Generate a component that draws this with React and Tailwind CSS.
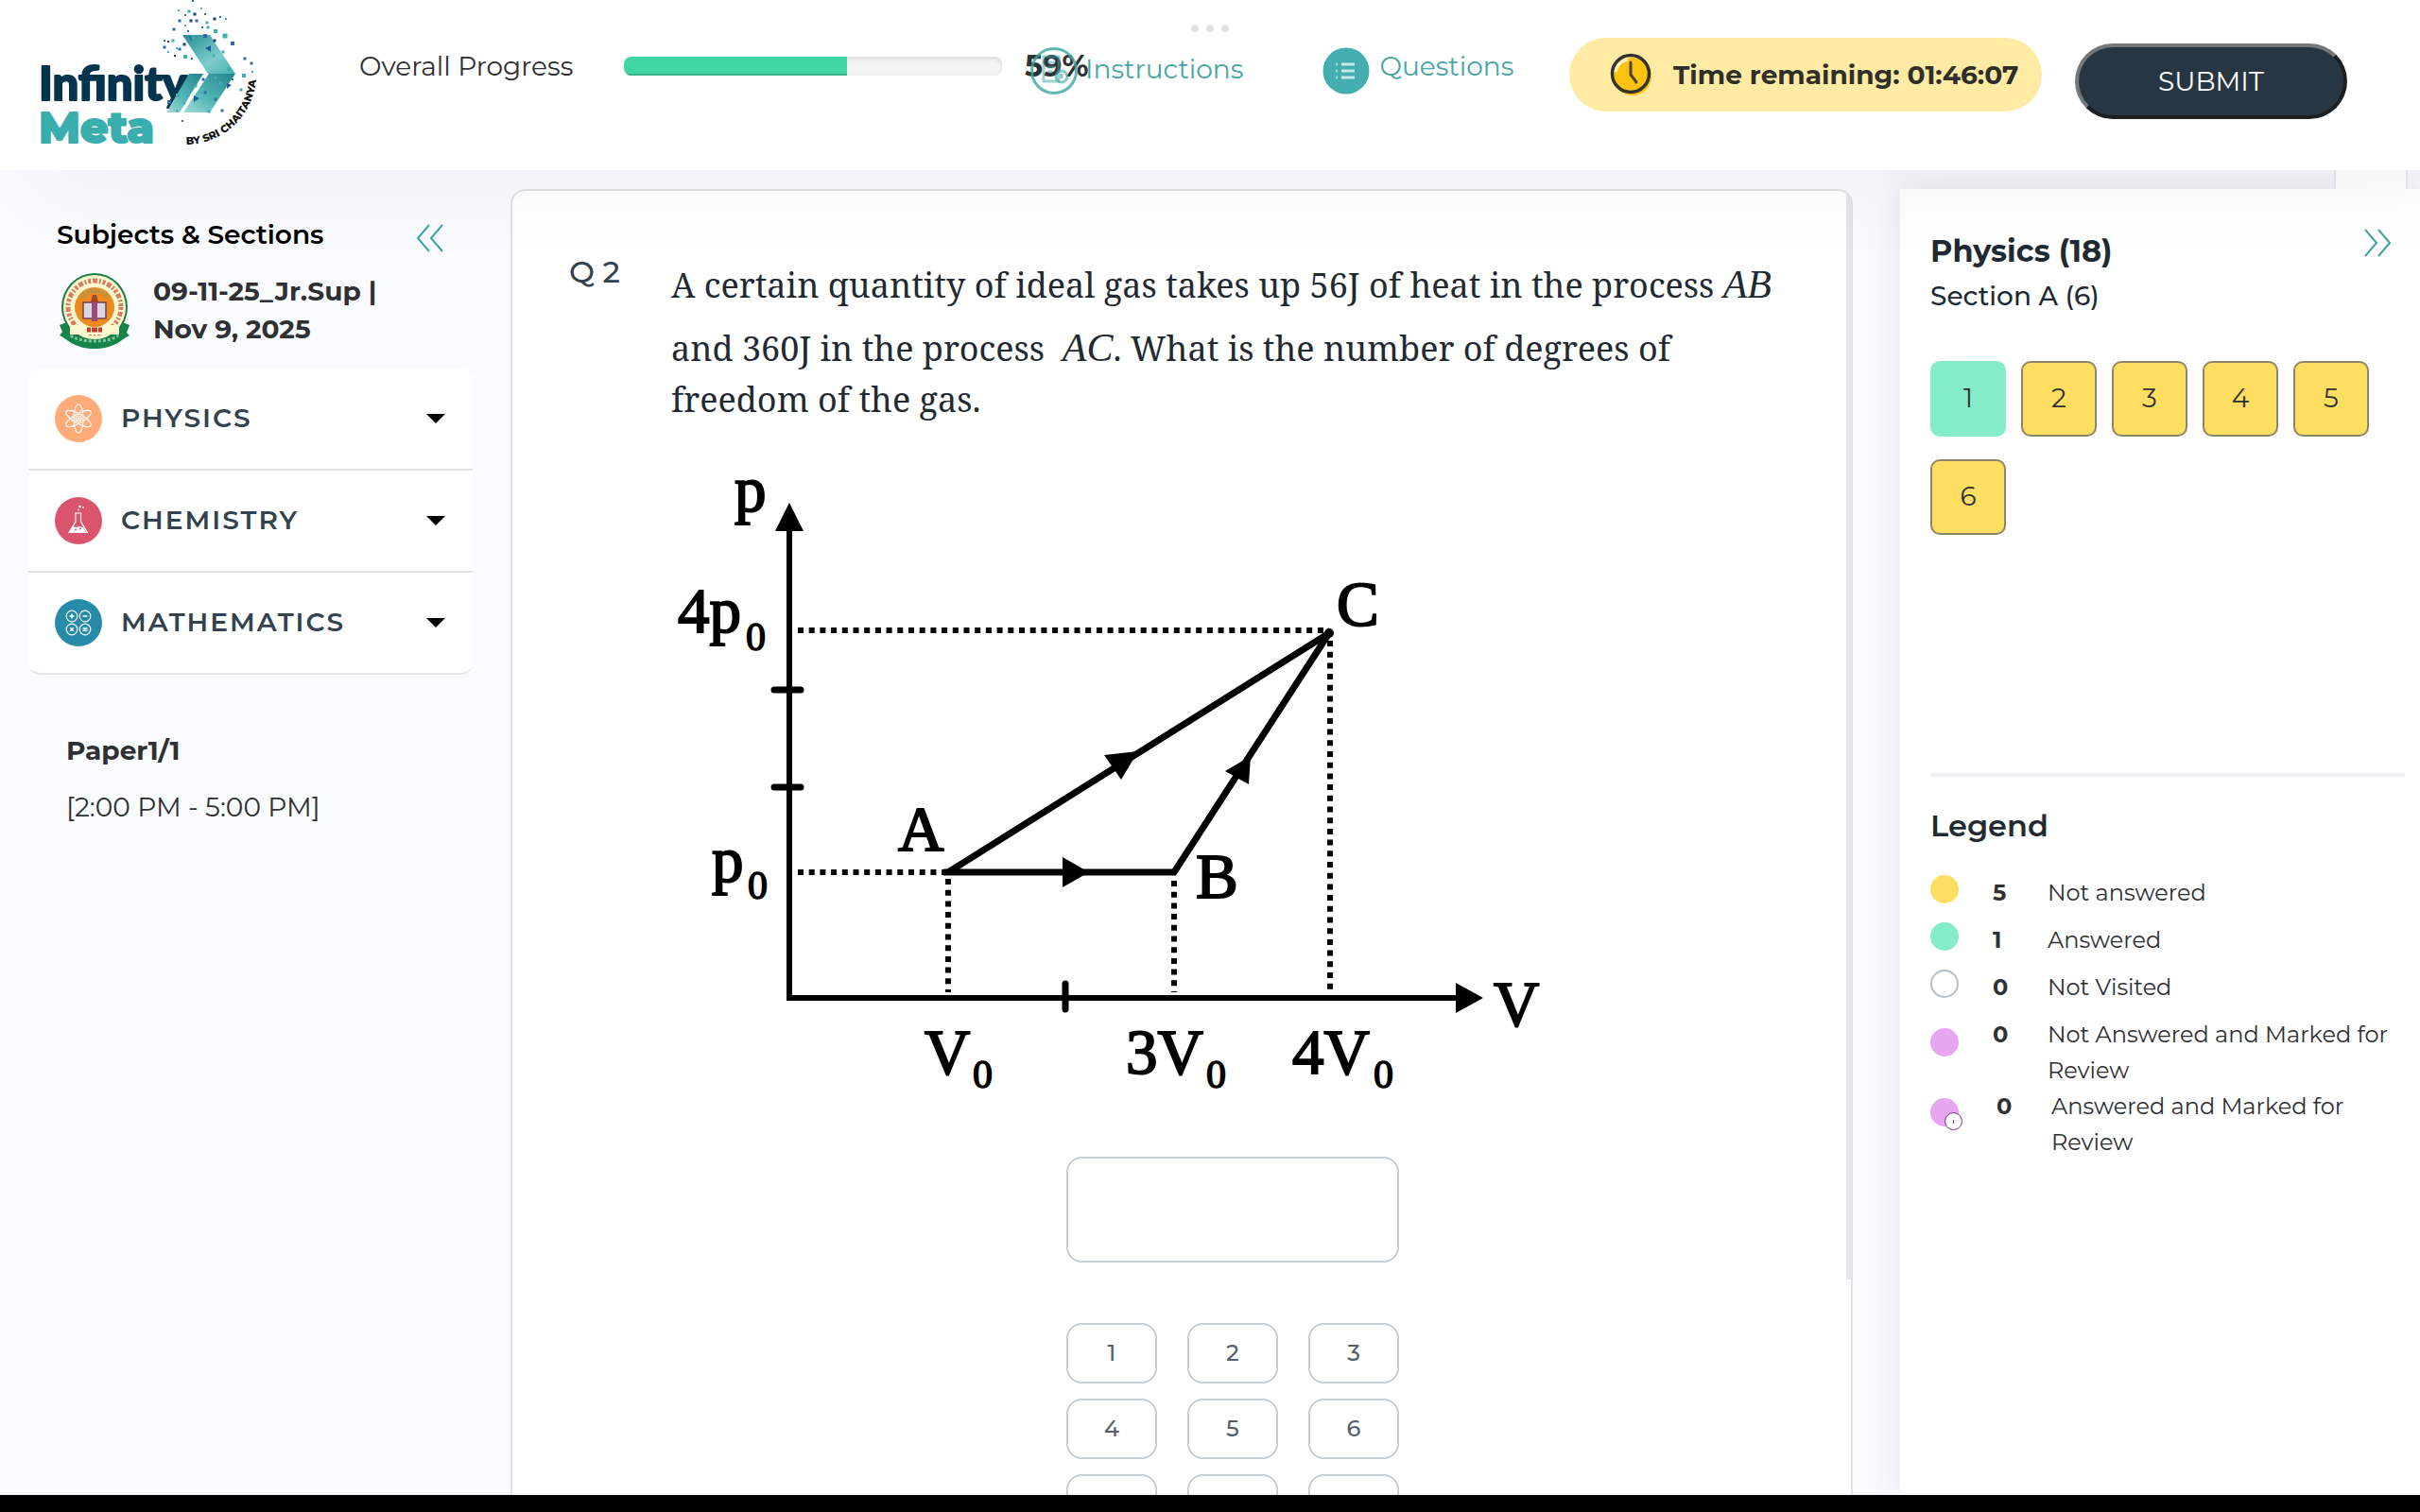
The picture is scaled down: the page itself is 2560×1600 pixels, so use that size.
import { useState } from 'react'

const subjects = [
  { name: 'PHYSICS', Icon: PhysicsIcon },
  { name: 'CHEMISTRY', Icon: ChemistryIcon },
  { name: 'MATHEMATICS', Icon: MathsIcon },
]

const questions = [
  { no: 1, answered: true },
  { no: 2, answered: false },
  { no: 3, answered: false },
  { no: 4, answered: false },
  { no: 5, answered: false },
  { no: 6, answered: false },
]

const legend = [
  { count: 5, label: 'Not answered', dot: 'bg-[#fdde60]' },
  { count: 1, label: 'Answered', dot: 'bg-[#84ecc9]' },
  { count: 0, label: 'Not Visited', dot: 'bg-white border-2 border-[#b7bec5]' },
  { count: 0, label: 'Not Answered and Marked for Review', dot: 'mt-3 bg-[#e7a5f2]', tall: true },
]

const keys = ['1', '2', '3', '4', '5', '6', '7', '8', '9']

// x, y, size, colour index
const specks = [
  [174, 1, 2, 1], [159, 11, 2, 0], [166, 16, 2, 1], [170, 12, 3, 0], [176, 15, 3, 2], [183, 9, 2, 0],
  [187, 15, 2, 1], [160, 22, 3, 1], [172, 22, 3, 2], [178, 22, 3, 1], [189, 24, 3, 0], [197, 20, 3, 2],
  [203, 18, 2, 1], [209, 20, 2, 0], [166, 27, 2, 0], [184, 29, 2, 1], [190, 29, 3, 0], [154, 31, 3, 1],
  [198, 33, 4, 0], [169, 33, 2, 1], [208, 38, 5, 0], [216, 46, 4, 1], [144, 43, 2, 1], [153, 43, 3, 0],
  [148, 44, 2, 2], [165, 47, 3, 2], [144, 50, 3, 1], [157, 51, 2, 0], [160, 52, 3, 1], [148, 55, 2, 0],
  [155, 59, 2, 2], [173, 62, 2, 1], [166, 60, 4, 0], [174, 40, 3, 0], [187, 38, 4, 1], [197, 43, 3, 2],
  [196, 59, 3, 0], [206, 55, 3, 0], [229, 62, 3, 1], [236, 67, 3, 1], [212, 73, 4, 0], [228, 80, 4, 0],
  [237, 76, 2, 0], [185, 84, 3, 1], [177, 91, 3, 0], [198, 82, 3, 0], [203, 88, 3, 0], [187, 98, 3, 1],
  [225, 95, 3, 0], [235, 94, 2, 1], [198, 105, 3, 1], [194, 104, 2, 0], [149, 108, 4, 1], [205, 117, 3, 1],
  [157, 117, 2, 0], [163, 128, 2, 1], [191, 118, 3, 0], [165, 109, 3, 0], [158, 101, 4, 0], [216, 84, 2, 1],
]
const speckColors = ['#3eb0b0', '#3468a8', '#1d3f7a']

function Logo() {
  return (
    <svg viewBox="0 0 260 170" className="block h-[170px] w-[260px]" role="img" aria-label="Infinity Meta by Sri Chaitanya">
      <defs>
        <linearGradient id="wingTop" x1="0" y1="0" x2="1" y2="1">
          <stop offset="0" stopColor="#238b91" />
          <stop offset="0.6" stopColor="#7dcdca" />
          <stop offset="1" stopColor="#46b0b0" />
        </linearGradient>
        <linearGradient id="wingLow" x1="1" y1="0" x2="0" y2="1">
          <stop offset="0" stopColor="#1f858c" />
          <stop offset="0.6" stopColor="#55b8b7" />
          <stop offset="1" stopColor="#a3dcda" />
        </linearGradient>
        <path id="byline" d="M167 153 A75 75 0 0 0 241 72" />
      </defs>
      <g strokeWidth="2" strokeLinejoin="round">
        <text x="11" y="106" fontSize="49" fontWeight="900" fontFamily="Lato, sans-serif" fill="#04344e" stroke="#04344e">Infinity</text>
        <text x="11" y="151" fontSize="46" fontWeight="800" fontFamily="Montserrat, Inter, sans-serif" fill="#3aaead" stroke="#3aaead">Meta</text>
      </g>
      <path d="M163 37h29l27 41h-29z" fill="url(#wingTop)" />
      <path d="M191 78h28l-27 41h-28z" fill="url(#wingLow)" />
      <path d="M170 78h15l-25 41h-14z" fill="url(#wingLow)" />
      <path d="M187 51l6-3v7zM175 101l6 3-6 4zM210 88l5 2-5 4zM170 38l5 2-3 3z" fill="#235e9c" />
      {specks.map(([x, y, s, c], i) => (
        <rect key={i} x={x - s / 2} y={y - s / 2} width={s} height={s} fill={speckColors[c]} />
      ))}
      <text fontSize="11" fontWeight="800" fill="#111" fontFamily="Montserrat, Inter, sans-serif">
        <textPath href="#byline">BY SRI CHAITANYA</textPath>
      </text>
    </svg>
  )
}

function Emblem() {
  return (
    <svg viewBox="0 0 80 82" className="block h-[82px] w-20 shrink-0" aria-hidden="true">
      <path d="M3 56l10-4h54l10 4-3 8 3 3c-8 3-14 14-37 14S11 70 3 67l3-4z" fill="#17854a" />
      <ellipse cx="40" cy="37" rx="35" ry="36" fill="#1b7f45" />
      <ellipse cx="40" cy="37" rx="33" ry="34" fill="#fdf8cf" />
      <circle cx="40" cy="37" r="28" fill="none" stroke="#c8553d" strokeWidth="5" strokeDasharray="3 2 5 2 2 2" pathLength="180" opacity="0.75" />
      <path d="M14 56h52v10H14z" fill="#fdf8cf" />
      <circle cx="40" cy="37" r="21" fill="#ee8a1d" />
      <path d="M26 27a17 17 0 0 1 28 0" fill="none" stroke="#9b9a5c" strokeWidth="5" strokeDasharray="2 2" />
      <path d="M38 24h4l2 8h-8z" fill="#a3462a" />
      <path d="M28 32h9l3 2 3-2h9v17H28z" fill="#dcd8de" stroke="#6f4256" strokeWidth="1.5" />
      <path d="M37 32h6v20h-6z" fill="#9c4a7e" />
      <path d="M32 61h4m1 0h6m1 0h4" stroke="#c23c2c" strokeWidth="5" />
      <path d="M15 67c8 8 42 8 50 0" fill="none" stroke="#7fc49a" strokeWidth="3" strokeDasharray="3 2" />
    </svg>
  )
}

function PhysicsIcon() {
  return (
    <svg viewBox="0 0 50 50" className="size-[50px] shrink-0" aria-hidden="true">
      <circle cx="25" cy="25" r="25" fill="#ffac7a" />
      <g fill="none" stroke="#fff" strokeWidth="1.2">
        <ellipse cx="25" cy="25" rx="5" ry="15" />
        <ellipse cx="25" cy="25" rx="5" ry="15" transform="rotate(60 25 25)" />
        <ellipse cx="25" cy="25" rx="5" ry="15" transform="rotate(120 25 25)" />
        <circle cx="25" cy="25" r="3" />
      </g>
      <circle cx="25" cy="25" r="1.6" fill="#fff" />
    </svg>
  )
}

function ChemistryIcon() {
  return (
    <svg viewBox="0 0 50 50" className="size-[50px] shrink-0" aria-hidden="true">
      <circle cx="25" cy="25" r="25" fill="#da546e" />
      <path d="M21 17h7m-6 0v9l-7 11.5h19.5l-7-11.5v-9" fill="none" stroke="#fff" strokeWidth="1.2" />
      <path d="M19 31l3 1 4-1 4 1 3 5H16z" fill="#fff" />
      <circle cx="22" cy="34.5" r="1" fill="#da546e" />
      <circle cx="27" cy="33.5" r="1" fill="#da546e" />
      <circle cx="25" cy="13.5" r="0.9" fill="#fff" />
      <circle cx="26.5" cy="10" r="1.3" fill="#fff" />
      <circle cx="30" cy="11" r="1" fill="#fff" />
    </svg>
  )
}

function MathsIcon() {
  return (
    <svg viewBox="0 0 50 50" className="size-[50px] shrink-0" aria-hidden="true">
      <circle cx="25" cy="25" r="25" fill="#288aa9" />
      <g fill="none" stroke="#fff" strokeWidth="1.2">
        <circle cx="18" cy="18" r="5.8" />
        <circle cx="32" cy="18" r="5.8" />
        <circle cx="18" cy="32" r="5.8" />
        <circle cx="32" cy="32" r="5.8" />
        <path d="M15.5 18h5M18 15.5v5M29.5 18h5M16.2 30.2l3.6 3.6M19.8 30.2l-3.6 3.6M29.5 31h5M29.5 33.2h5" strokeWidth="1.5" />
      </g>
    </svg>
  )
}

function ClockIcon() {
  return (
    <svg viewBox="0 0 50 50" className="size-[50px] shrink-0" aria-hidden="true">
      <circle cx="27" cy="27" r="20" fill="#ffc20e" />
      <circle cx="25" cy="24" r="19.5" fill="none" stroke="#33352c" strokeWidth="3.5" />
      <path d="M25 12v13l6 8" fill="none" stroke="#4a4325" strokeWidth="3" strokeLinecap="round" />
      <path d="M9 22a16 16 0 0 1 13-13" fill="none" stroke="#fff3c4" strokeWidth="3" />
    </svg>
  )
}

function DoubleChevron({ right }) {
  return (
    <svg viewBox="0 0 30 30" className="size-[30px]" fill="none" stroke="#3aa6a4" strokeWidth="2" aria-hidden="true">
      {right ? <path d="M2 1l12 14L2 29M16 1l12 14-12 14" /> : <path d="M14 1L2 15l12 14M28 1L16 15l12 14" />}
    </svg>
  )
}

function PVGraph() {
  return (
    <svg viewBox="30 0 970 700" className="block h-[700px] w-[970px]" role="img" aria-label="Pressure against volume, processes AB, BC and AC">
      <g stroke="#000" fill="none" strokeWidth="6">
        <path d="M155 70V576H865" />
        <path d="M139 250h28M139 353h28M447 561v27" strokeWidth="7" strokeLinecap="round" />
        <path d="M323 443L726 190L562 443H318" strokeWidth="7" />
        <path d="M164 187h562M164 443h156M323 450v120M562 452v118M727 198v372" strokeDasharray="6 5.7" />
      </g>
      <g fill="#000">
        <path d="M155 52l15 30h-30zM889 576l-29-16v32zM472 443l-28-16v32zM524 315l-36 4 18 26zM643 320l-27 16 25 14z" />
        <circle cx="726" cy="190" r="5" />
      </g>
      <g fill="#000" stroke="#000" strokeWidth="2" fontSize="67" fontFamily="'Liberation Serif', serif">
        <text x="97" y="61">p</text>
        <text x="37" y="189">4p</text>
        <text x="73" y="453">p</text>
        <text x="734" y="182">C</text>
        <text x="270" y="420">A</text>
        <text x="585" y="470">B</text>
        <text x="900" y="605">V</text>
        <text x="298" y="656">V</text>
        <text x="511" y="656">3V</text>
        <text x="687" y="656">4V</text>
        <g fontSize="42" strokeWidth="1.5">
          <text x="109" y="208">0</text>
          <text x="111" y="471">0</text>
          <text x="349" y="671">0</text>
          <text x="596" y="671">0</text>
          <text x="773" y="671">0</text>
        </g>
      </g>
    </svg>
  )
}

function Header() {
  return (
    <header className="relative z-10 flex h-[180px] shrink-0 items-start bg-white pl-[30px] pr-[77px] text-[28px] shadow-[40px_10px_100px_rgba(0,0,0,0.06)]">
      <Logo />
      <div className="mt-12 ml-[90px] flex items-center leading-[44px]">
        <span className="w-[280px]">Overall Progress</span>
        <div role="progressbar" aria-label="Overall Progress" aria-valuenow={59} className="h-5 w-[400px] overflow-hidden rounded-lg bg-[#f4f4f4] shadow-[inset_0_2px_4px_rgba(0,0,0,0.12)]">
          <div className="h-full border-b-2 border-[#3bb488] bg-[#40d6a2]" style={{ width: '59%' }} />
        </div>
        <span className="ml-6 w-[70px] text-[32px] font-bold">59%</span>
      </div>
      <a href="#instructions" className="mt-[50px] -ml-16 flex items-center leading-10 text-[#48a6a5]">
        <svg viewBox="0 0 50 50" className="mr-2 size-[50px]" fill="none" stroke="#3aa6a4" aria-hidden="true">
          <circle cx="25" cy="25" r="23.5" strokeWidth="3" opacity="0.8" />
          <path d="M14 10h16v26H14zM18 16h8M18 21h8M18 26h5" strokeWidth="3" opacity="0.5" />
          <circle cx="33" cy="31" r="6" strokeWidth="3" opacity="0.6" />
          <path d="M33 28v5" strokeWidth="3" opacity="0.6" />
        </svg>
        <span className="mb-1">Instructions</span>
      </a>
      <a href="#questions" className="mt-[50px] ml-[84px] flex items-center leading-10 text-[#48a6a5]">
        <svg viewBox="0 0 50 50" className="mr-[10px] size-[50px]" aria-hidden="true">
          <circle cx="25" cy="25" r="24.5" fill="#43adaf" />
          <path d="M20 18h14M20 25h14M20 32h14" stroke="#c4e9e9" strokeWidth="3" />
          <path d="M14 18h2M14 25h2M14 32h2" stroke="#9fd6d7" strokeWidth="3" />
        </svg>
        <span className="mb-[10px]">Questions</span>
      </a>
      <div className="mt-10 ml-auto flex h-[78px] w-[500px] items-center rounded-full bg-[#ffeba3] pl-10">
        <ClockIcon />
        <span className="ml-5 leading-10 font-bold whitespace-nowrap text-[#2f2f2a]">Time remaining: 01:46:07</span>
      </div>
      <button type="button" className="mt-[46px] ml-[35px] h-20 w-[288px] rounded-full border-4 border-t-[#757779] border-r-[#1c1f22] border-b-[#1c1f22] border-l-[#757779] bg-[#263643] text-white">
        SUBMIT
      </button>
      <div className="absolute top-[26px] left-1/2 flex -translate-x-1/2 gap-2">
        <span className="size-2 rounded-full bg-[#dfdfdf]" />
        <span className="size-2 rounded-full bg-[#dfdfdf]" />
        <span className="size-2 rounded-full bg-[#dfdfdf]" />
      </div>
    </header>
  )
}

function Sidebar() {
  return (
    <aside className="w-[540px] shrink-0 pt-7 pr-10 pl-[30px]">
      <div className="flex items-center justify-between pr-[30px] pl-[30px]">
        <h2 className="text-[28px] leading-10 font-semibold text-black">Subjects &amp; Sections</h2>
        <button type="button" aria-label="Collapse sections" className="mt-2">
          <DoubleChevron />
        </button>
      </div>
      <div className="mt-5 flex pl-[30px]">
        <Emblem />
        <p className="ml-[22px] w-[260px] text-[28px] leading-10 font-bold">09-11-25_Jr.Sup | Nov 9, 2025</p>
      </div>
      <ul className="mt-5 overflow-hidden rounded-xl bg-white">
        {subjects.map(({ name, Icon }) => (
          <li key={name} className="border-b-2 border-[#e3e4e6] last:rounded-b-xl">
            <button type="button" className="flex h-[106px] w-full items-center pr-7 pl-7">
              <Icon />
              <span className="mb-0.5 ml-5 text-[28px] leading-10 font-semibold tracking-[2px] text-[#32424e]">{name}</span>
              <svg viewBox="0 0 22 12" className="ml-auto h-3 w-[22px]" aria-hidden="true">
                <path d="M1 1h20l-10 10z" fill="#000" />
              </svg>
            </button>
          </li>
        ))}
      </ul>
      <div className="mt-[60px] pl-10 text-[28px] leading-10">
        <p className="font-bold">Paper1/1</p>
        <p className="mt-5">[2:00 PM - 5:00 PM]</p>
      </div>
    </aside>
  )
}

function QuestionPanel() {
  const [answer, setAnswer] = useState('')
  return (
    <main className="relative min-w-0 flex-1 overflow-hidden rounded-t-2xl border-2 border-b-0 border-[#e0e2e5] bg-white pt-14 pr-[60px] pl-[60px]">
      <div className="flex">
        <h1 className="mt-1.5 w-[108px] shrink-0 text-[32px] leading-[48px] font-medium text-[#32424e]">Q 2</h1>
        <div className="flex-1">
          <p className="max-w-[1180px] pt-1 font-['Noto_Serif','DejaVu_Serif_Condensed','DejaVu_Serif',serif] text-[36px] leading-[54px] text-[#1f2a33]">
            A certain quantity of ideal gas takes up 56J of heat in the process <i className="inline-block pt-3 font-['Liberation_Serif',serif] text-[42px]">AB</i> and 360J in the process &nbsp;<i className="inline-block pt-3 font-['Liberation_Serif',serif] text-[42px]">AC</i>. What is the number of degrees of freedom of the gas.
          </p>
          <div className="mt-[30px]">
            <PVGraph />
          </div>
          <div className="mx-auto mt-11 w-[352px]">
            <input
              type="text"
              aria-label="Answer"
              value={answer}
              onChange={(e) => setAnswer(e.target.value)}
              className="block h-28 w-full rounded-2xl border-2 border-[#c7ced2] px-6 text-[28px]"
            />
            <div className="mt-16 grid grid-cols-3 gap-x-8 gap-y-4">
              {keys.map((key) => (
                <button
                  key={key}
                  type="button"
                  onClick={() => setAnswer(answer + key)}
                  className="h-16 rounded-2xl border-2 border-[#c7ced2] text-[24px] font-medium text-[#55606b]"
                >
                  {key}
                </button>
              ))}
            </div>
          </div>
        </div>
      </div>
      <div className="absolute top-0 -right-px h-[1152px] w-1.5 bg-[#e3e8eb]" />
    </main>
  )
}

function QuestionPalette() {
  return (
    <aside className="relative ml-[50px] w-[550px] shrink-0 bg-white pt-[42px] pr-4 pl-8 shadow-[0_0_40px_rgba(0,0,0,0.1)]">
      <div className="absolute -top-8 right-[13px] h-8 w-[78px] rounded-t-2xl border-2 border-b-0 border-[#e6e8eb] bg-white" />
      <button type="button" aria-label="Collapse palette" className="absolute top-[42px] right-[30px]">
        <DoubleChevron right />
      </button>
      <h2 className="text-[32px] leading-[48px] font-bold text-[#1f2a33]">Physics (18)</h2>
      <p className="text-[28px] leading-[46px] font-medium text-[#1f2a33]">Section A (6)</p>
      <div className="mt-[46px] flex flex-wrap gap-x-4 gap-y-6">
        {questions.map(({ no, answered }) => (
          <button
            key={no}
            type="button"
            className={
              answered
                ? 'size-20 rounded-[10px] bg-[#84ecc9] pb-0.5 text-[28px] text-[#2f3033]'
                : 'size-20 rounded-[10px] border-2 border-[#8d8668] bg-[#fdde60] pb-0.5 text-[28px] text-[#2f3033]'
            }
          >
            {no}
          </button>
        ))}
      </div>
      <div className="mt-[252px] border-t-4 border-[#f1f2f5] pt-7">
        <h3 className="text-[32px] leading-[48px] font-semibold text-[#1f2a33]">Legend</h3>
        <ul className="mt-7 text-[24px] leading-[38px]">
          {legend.map(({ count, label, dot, tall }) => (
            <li key={label} className={tall ? 'flex items-start' : 'mb-3 flex items-start'}>
              <span className={`size-[30px] shrink-0 rounded-full ${dot}`} />
              <b className="ml-9 w-[58px] shrink-0">{count}</b>
              <span>{label}</span>
            </li>
          ))}
          <li className="flex items-start">
            <span className="relative mt-2.5 size-[30px] shrink-0 rounded-full bg-[#e7a5f2]">
              <span className="absolute -right-1 -bottom-1 flex size-[19px] items-center justify-center rounded-full border border-[#8e24aa] bg-white">
                <span className="h-1 w-px bg-[#8e24aa]" />
              </span>
            </span>
            <b className="ml-10 w-[58px] shrink-0">0</b>
            <span>Answered and Marked for Review</span>
          </li>
        </ul>
      </div>
    </aside>
  )
}

function App() {
  return (
    <div className="flex h-screen flex-col overflow-hidden bg-[#fafbff] font-[Montserrat,Inter,sans-serif] text-[#2f3033]">
      <Header />
      <div className="flex min-h-0 flex-1 pt-5">
        <Sidebar />
        <QuestionPanel />
        <QuestionPalette />
      </div>
      <footer className="relative z-10 h-[18px] shrink-0 bg-black" />
    </div>
  )
}

export default App
